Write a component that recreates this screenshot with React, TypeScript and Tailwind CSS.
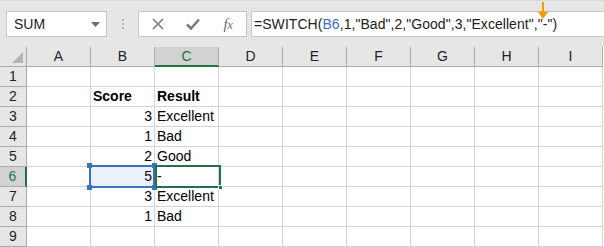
import React from "react";

const cols = ["A", "B", "C", "D", "E", "F", "G", "H", "I"];

type Cell = { v: string; align?: "l" | "r"; bold?: boolean };
const data: Record<number, Record<string, Cell>> = {
  2: { B: { v: "Score", bold: true }, C: { v: "Result", bold: true } },
  3: { B: { v: "3", align: "r" }, C: { v: "Excellent" } },
  4: { B: { v: "1", align: "r" }, C: { v: "Bad" } },
  5: { B: { v: "2", align: "r" }, C: { v: "Good" } },
  6: { B: { v: "5", align: "r" }, C: { v: "-" } },
  7: { B: { v: "3", align: "r" }, C: { v: "Excellent" } },
  8: { B: { v: "1", align: "r" }, C: { v: "Bad" } },
};

export default function App() {
  return (
    <div
      className="w-[604px] h-[247px] overflow-hidden bg-white text-[#000] relative"
      style={{ fontFamily: '"Liberation Sans", Arial, sans-serif' }}
    >
      {/* Top bar */}
      <div className="h-[47px] bg-[#e6e6e6] border-t border-[#dadada] flex items-start pl-[6px] pt-[10px]">
        <div className="w-[101px] h-[26px] bg-white border border-[#c6c6c6] flex items-center justify-between pl-[7px] pr-[6px]">
          <span className="text-[14px] text-[#222]">SUM</span>
          <svg width="9" height="5" viewBox="0 0 9 5">
            <path d="M0 0 L9 0 L4.5 5 Z" fill="#6b6b6b" />
          </svg>
        </div>
        <div className="w-[31px] h-[26px] flex flex-col items-center justify-center gap-[2px]">
          <div className="w-[2px] h-[2px] bg-[#b0b0b0]" />
          <div className="w-[2px] h-[2px] bg-[#b0b0b0]" />
          <div className="w-[2px] h-[2px] bg-[#b0b0b0]" />
        </div>
        <div className="w-[109px] h-[26px] bg-white border border-[#c6c6c6] flex items-center">
          <div className="w-[36px] flex justify-center pl-[2px]">
            <svg width="12" height="12" viewBox="0 0 12 12">
              <path d="M1 1 L11 11 M11 1 L1 11" stroke="#7a7a7a" strokeWidth="1.6" />
            </svg>
          </div>
          <div className="w-[36px] flex justify-center">
            <svg width="14" height="12" viewBox="0 0 14 12">
              <path d="M1 6.5 L5 10.5 L13 1.5" stroke="#7a7a7a" strokeWidth="2.6" fill="none" />
            </svg>
          </div>
          <div className="w-[36px] flex justify-center">
            <span
              className="text-[15px] italic text-[#6a6a6a] leading-none"
              style={{ fontFamily: '"Liberation Serif", "Times New Roman", serif' }}
            >
              f<span className="text-[12px]">x</span>
            </span>
          </div>
        </div>
        <div className="ml-[4px] flex-1 h-[26px] bg-white border-y border-l border-[#c6c6c6] flex items-center pl-[2px]">
          <span className="text-[14px] text-[#222] whitespace-nowrap tracking-[0.05px]">
            =SWITCH(<span className="text-[#3a6fc4]">B6</span>,1,"Bad",2,"Good",3,"Excellent","-")
          </span>
        </div>
      </div>

      {/* Orange arrow */}
      <svg className="absolute left-[537px] top-[2px]" width="12" height="18" viewBox="0 0 12 18">
        <path d="M6 0 L6 11" stroke="#f39c12" strokeWidth="2" />
        <path d="M0.5 9.5 L11.5 9.5 L6 17 Z" fill="#f39c12" />
      </svg>

      {/* Grid */}
      <div className="relative">
        <div className="grid grid-cols-[27px_repeat(9,64px)]">
          {/* header row */}
          <div className="h-[20px] bg-[#e6e6e6] border-r border-b border-[#ababab] relative">
            <svg className="absolute right-[3px] bottom-[3px]" width="11" height="11" viewBox="0 0 11 11">
              <path d="M11 0 L11 11 L0 11 Z" fill="#b4b4b4" />
            </svg>
          </div>
          {cols.map((c) => (
            <div
              key={c}
              className={
                c === "C"
                  ? "h-[20px] bg-[#d2d2d2] border-r border-[#ababab] border-b-2 border-b-[#217346] flex items-center justify-center text-[14px] text-[#217346]"
                  : "h-[20px] bg-[#e6e6e6] border-r border-b border-[#ababab] flex items-center justify-center text-[14px] text-[#222]"
              }
            >
              {c}
            </div>
          ))}
          {Array.from({ length: 9 }, (_, i) => i + 1).map((r) => (
            <React.Fragment key={r}>
              <div
                className={
                  r === 6
                    ? "h-[20px] bg-[#d2d2d2] border-b border-[#ababab] border-r-2 border-r-[#217346] flex items-center justify-center text-[14px] text-[#217346]"
                    : "h-[20px] bg-[#e6e6e6] border-r border-b border-[#ababab] flex items-center justify-center text-[14px] text-[#222]"
                }
              >
                {r}
              </div>
              {cols.map((c) => {
                const cell = data[r]?.[c];
                return (
                  <div
                    key={c}
                    className={
                      "h-[20px] border-r border-b border-[#d4d4d4] flex items-end pb-[1px] px-[2px] text-[14px] leading-[17px] whitespace-nowrap " +
                      (cell?.align === "r" ? "justify-end " : "justify-start ") +
                      (cell?.bold ? "font-bold " : "")
                    }
                  >
                    {cell?.v ?? ""}
                  </div>
                );
              })}
            </React.Fragment>
          ))}
        </div>

        {/* B6 reference highlight */}
        <div className="absolute left-[89px] top-[118px] w-[66px] h-[23px] border-2 border-[#3a6fc4] bg-[#3a6fc4]/10 pointer-events-none">
          <div className="absolute -left-[4px] -top-[4px] w-[5px] h-[5px] bg-[#3a6fc4]" />
          <div className="absolute -right-[4px] -top-[4px] w-[5px] h-[5px] bg-[#3a6fc4]" />
          <div className="absolute -left-[4px] -bottom-[4px] w-[5px] h-[5px] bg-[#3a6fc4]" />
          <div className="absolute -right-[4px] -bottom-[4px] w-[5px] h-[5px] bg-[#3a6fc4]" />
        </div>
        {/* C6 active cell */}
        <div className="absolute left-[155px] top-[118px] w-[66px] h-[23px] border-2 border-[#217346] pointer-events-none">
          <div className="absolute -right-[4px] -bottom-[4px] w-[5px] h-[5px] bg-[#217346] border border-white" />
        </div>
      </div>
    </div>
  );
}
